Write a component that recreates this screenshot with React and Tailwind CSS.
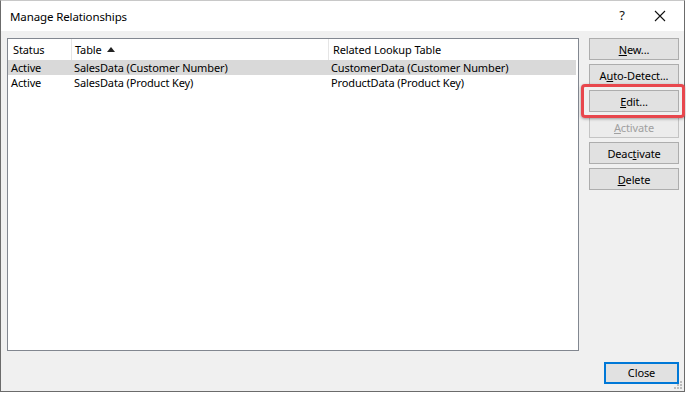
import React from "react";

const font = { fontFamily: '"Noto Sans", "Segoe UI", sans-serif', letterSpacing: "-0.12px" };

function Btn({ children, disabled, className = "" }) {
  return (
    <div
      className={
        "h-[22px] w-[90px] flex items-center justify-center text-[11px] leading-none border " +
        (disabled
          ? "bg-[#ececec] border-[#c4c4c4] text-[#a0a0a0] "
          : "bg-[#e1e1e1] border-[#adadad] text-[#000] ") +
        className
      }
    >
      {children}
    </div>
  );
}

export default function App() {
  return (
    <div className="w-[686px] h-[393px] bg-white" style={font}>
      <div className="w-[685px] h-[392px] border border-[#6b6b6b] border-t-[#c8c8c8] flex flex-col bg-[#f0f0f0]">
        {/* title bar */}
        <div className="h-[30px] bg-white flex items-center shrink-0">
          <div className="pl-[9px] pt-[2px] text-[11.5px] text-[#000] flex-1">Manage Relationships</div>
          <div className="w-[20px] text-center text-[13px] text-[#111] mr-[22px]">?</div>
          <svg width="12" height="12" viewBox="0 0 12 12" className="mr-[18px]">
            <path d="M1 1 L11 11 M11 1 L1 11" stroke="#111" strokeWidth="1.1" />
          </svg>
        </div>
        {/* body */}
        <div className="flex-1 flex flex-col pl-[6px] pr-[5px] pt-[7px] relative">
          <div className="flex items-start">
            <div className="w-[572px] h-[313px] bg-white border border-[#828790] text-[11px] leading-[15px] text-black">
              <div className="h-[21px] flex items-center">
                <div className="w-[64px] h-full flex items-center pl-[5px] border-r border-[#e5e5e5]">Status</div>
                <div className="w-[257px] h-full flex items-center pl-[3px] border-r border-[#e5e5e5]">
                  Table
                  <svg width="8" height="5" viewBox="0 0 8 5" className="ml-[5px] mb-[1px]">
                    <path d="M0 5 L4 0 L8 5 Z" fill="#222" />
                  </svg>
                </div>
                <div className="flex-1 h-full flex items-center pl-[4px]">Related Lookup Table</div>
              </div>
              <div className="h-[15px] flex items-center bg-[#d9d9d9] mr-[2px]">
                <div className="w-[66px] pl-[3px]">Active</div>
                <div className="w-[257px]">SalesData (Customer Number)</div>
                <div className="flex-1">CustomerData (Customer Number)</div>
              </div>
              <div className="h-[15px] flex items-center">
                <div className="w-[66px] pl-[3px]">Active</div>
                <div className="w-[257px]">SalesData (Product Key)</div>
                <div className="flex-1">ProductData (Product Key)</div>
              </div>
            </div>
            <div className="ml-[10px] flex flex-col gap-[4px]">
              <Btn><span><u>N</u>ew...</span></Btn>
              <Btn><span>A<u>u</u>to-Detect...</span></Btn>
              <div className="relative">
                <Btn><span><u>E</u>dit...</span></Btn>
                <div className="absolute left-[-8px] top-[-6px] w-[104px] h-[34px] border-[3px] border-[#e8474d] rounded-[4px] shadow-[0_1px_3px_rgba(0,0,0,0.35)]"></div>
              </div>
              <Btn disabled><span><u>A</u>ctivate</span></Btn>
              <Btn><span>Deac<u>t</u>ivate</span></Btn>
              <Btn><span><u>D</u>elete</span></Btn>
            </div>
          </div>
          <div className="flex justify-end mt-[11px]">
            <div className="w-[75px] h-[22px] flex items-center justify-center text-[11px] bg-[#e1e1e1] border-2 border-[#0078d7]">Close</div>
          </div>
          <svg width="10" height="10" viewBox="0 0 10 10" className="absolute right-[1px] bottom-[1px]">
            <rect x="7" y="1" width="2" height="2" fill="#bcbcbc" />
            <rect x="4" y="4" width="2" height="2" fill="#bcbcbc" />
            <rect x="7" y="4" width="2" height="2" fill="#bcbcbc" />
            <rect x="1" y="7" width="2" height="2" fill="#bcbcbc" />
            <rect x="4" y="7" width="2" height="2" fill="#bcbcbc" />
            <rect x="7" y="7" width="2" height="2" fill="#bcbcbc" />
          </svg>
        </div>
      </div>
    </div>
  );
}
